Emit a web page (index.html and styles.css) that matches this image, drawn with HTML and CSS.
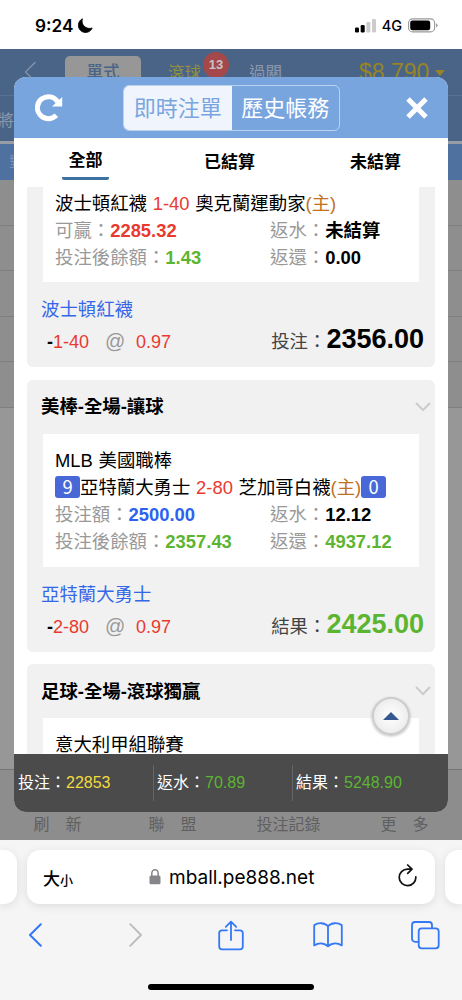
FILE: index.html
```html
<!DOCTYPE html>
<html lang="zh-Hant">
<head>
  <meta charset="UTF-8" />
  <meta name="viewport" content="width=device-width, initial-scale=1.0" />
  <title>即時注單</title>
  <link rel="stylesheet" href="styles.css">
</head>
<body>
  <div class="status">
    <span class="time">9:24</span>
    <svg class="moon" width="15" height="15" viewBox="0 0 15 15"><path d="M4.400.8A7.200 7.200 0 1 0 14.200 10 C8.500 12 2.500 7 4.400.8Z" fill="#000" stroke="#000" stroke-width=".8" stroke-linejoin="round"/></svg>
    <svg class="signal" width="22" height="14" viewBox="0 0 22 14">
      <rect x="0" y="8.5" width="4" height="5" rx="1.2"/>
      <rect x="5.7" y="6" width="4" height="7.5" rx="1.2"/>
      <rect x="11.4" y="3" width="4" height="10.5" rx="1.2" fill="#ccc"/>
      <rect x="17" y="0" width="4" height="13.5" rx="1.2" fill="#ccc"/>
    </svg>
    <span class="net">4G</span>
    <svg class="battery" width="30" height="15" viewBox="0 0 30 15">
      <rect x=".6" y=".9" width="26" height="13" rx="4" fill="none" stroke="#999" stroke-width="1.1"/>
      <rect x="2.2" y="2.5" width="20" height="9.8" rx="2.2"/>
      <path d="M28 5.3q1.5.6 1.5 2t-1.5 2z" fill="#999"/>
    </svg>
  </div>

  <div class="page">
    <div class="topbar">
      <svg class="prev" width="13" height="22" viewBox="0 0 13 22"><path d="M11.5 1 1.5 11l10 10" fill="none" stroke="#8494aa" stroke-width="1.3"/></svg>
      <span class="mode active">單式</span>
      <span class="mode live">滾球<b class="num">13</b></span>
      <span class="mode">過關</span>
      <span class="money">$8,790</span>
      <i class="caret"></i>
    </div>
    <div class="subbar">將開賽</div>
    <div class="sortbar">對</div>
    <div class="rows">
      <div></div><div></div><div></div><div></div><div></div>
    </div>
    <div class="bottomnav">
      <span class="wide">刷新</span>
      <span class="wide">聯盟</span>
      <span>投注記錄</span>
      <span class="wide">更多</span>
    </div>

    <div class="modal">
      <div class="modal-head">
        <svg class="reload" width="28" height="28" viewBox="0 0 28 28">
          <path d="M21.300 21.300A11 11 0 1 1 22.800 8" fill="none" stroke="#fff" stroke-width="5"/>
          <path d="M27.200 3v9.600H17z" fill="#fff"/>
        </svg>
        <div class="switch"><span class="on">即時注單</span><span>歷史帳務</span></div>
        <svg class="close" width="22" height="22" viewBox="0 0 22 22"><path d="m2 2 18 18M20 2 2 20" stroke="#fff" stroke-width="5"/></svg>
      </div>
      <div class="tabs">
        <span class="current">全部</span>
        <span>已結算</span>
        <span>未結算</span>
      </div>

      <div class="list">
        <div class="card first">
          <div class="box">
            <div>波士頓紅襪 <span class="red">1-40</span> 奧克蘭運動家<span class="host">(主)</span></div>
            <div class="pair"><span>可贏：<b class="red">2285.32</b></span><span>返水：<b>未結算</b></span></div>
            <div class="pair"><span>投注後餘額：<b class="green">1.43</b></span><span>返還：<b>0.00</b></span></div>
          </div>
          <div class="pick">波士頓紅襪</div>
          <div class="result">
            <span class="odds"><b>-</b>1-40</span><span class="at">@</span><span class="red">0.97</span>
            <span class="sum">投注：<b>2356.00</b></span>
          </div>
        </div>

        <div class="card">
          <div class="title">美棒-全場-讓球
            <svg width="16" height="10" viewBox="0 0 16 10"><path d="m1 1 7 7 7-7" fill="none" stroke="#ccc" stroke-width="2"/></svg>
          </div>
          <div class="box">
            <div>MLB 美國職棒</div>
            <div class="match"><span class="score">9</span>亞特蘭大勇士 <span class="red">2-80</span> 芝加哥白襪<span class="host">(主)</span><span class="score">0</span></div>
            <div class="pair"><span>投注額：<b class="blue">2500.00</b></span><span>返水：<b>12.12</b></span></div>
            <div class="pair"><span>投注後餘額：<b class="green">2357.43</b></span><span>返還：<b class="green">4937.12</b></span></div>
          </div>
          <div class="pick">亞特蘭大勇士</div>
          <div class="result">
            <span class="odds"><b>-</b>2-80</span><span class="at">@</span><span class="red">0.97</span>
            <span class="sum">結果：<b class="green">2425.00</b></span>
          </div>
        </div>

        <div class="card">
          <div class="title">足球-全場-滾球獨贏
            <svg width="16" height="10" viewBox="0 0 16 10"><path d="m1 1 7 7 7-7" fill="none" stroke="#ccc" stroke-width="2"/></svg>
          </div>
          <div class="box">
            <div>意大利甲組聯賽</div>
          </div>
        </div>
      </div>

      <div class="totals">
        <span>投注：<em class="yellow">22853</em></span>
        <span>返水：<em>70.89</em></span>
        <span>結果：<em>5248.90</em></span>
      </div>
      <div class="gotop"><i></i></div>
    </div>
  </div>

  <div class="browser">
    <div class="address">
      <div class="side left"></div>
      <div class="url">
        <span class="size">大<small>小</small></span>
        <svg class="lock" width="12" height="16" viewBox="0 0 12 16"><path d="M2.8 7V4.4a3.2 3.6 0 0 1 6.4 0V7" fill="none" stroke="#85858a" stroke-width="1.5"/><rect x=".5" y="6.6" width="11" height="8.6" rx="1.5" fill="#85858a"/></svg>
        <span class="host-name">mball.pe888.net</span>
        <svg class="again" width="20" height="23" viewBox="0 0 20 23"><path d="M17.8 12.8A8.3 8.3 0 1 1 9.5 5.1h4M9.7 1l4.3 4.2-4.3 4.2" fill="none" stroke="#111" stroke-width="1.7" stroke-linecap="round" stroke-linejoin="round"/></svg>
      </div>
      <div class="side right"></div>
    </div>
    <div class="tools">
      <svg width="14" height="24" viewBox="0 0 14 24"><path d="M12.8 1.2 2 12l10.8 10.8" stroke-width="2"/></svg>
      <svg class="off" width="14" height="24" viewBox="0 0 14 24"><path d="M1.2 1.2 12 12 1.2 22.8"/></svg>
      <svg width="26" height="31" viewBox="0 0 26 31"><path d="M9 10.3H4A2.8 2.8 0 0 0 1.2 13v13.5A2.8 2.8 0 0 0 4 29.3h18a2.8 2.8 0 0 0 2.8-2.8V13a2.8 2.8 0 0 0-2.8-2.7h-5M13 20V1.7M7.8 6.8 13 1.6l5.2 5.2"/></svg>
      <svg width="30" height="26" viewBox="0 0 30 26"><path d="M15 24.2V4.2C11.5.4 4.8.4 1.2 3.3V23.4C5.5 20.6 11 20.8 15 24.2 19 20.8 24.5 20.6 28.8 23.4V3.3C25.2.4 18.500.4 15 4.2Z"/></svg>
      <svg width="29" height="29" viewBox="0 0 29 29"><rect x="7.7" y="7.3" width="20" height="20" rx="3"/><path d="M7.5 20.8H4a3 3 0 0 1-3-3V4a3 3 0 0 1 3-3h14a3 3 0 0 1 3 3v3"/></svg>
    </div>
    <div class="home"></div>
  </div>
</body>
</html>
```
FILE: styles.css
```css
* {
  box-sizing: border-box;
}
body {
  margin: 0;
  width: 462px;
  height: 1000px;
  overflow: hidden;
  background: #fff;
  color: #000;
  font-family: "Liberation Sans", "Noto Sans CJK TC", sans-serif;
  font-size: 18.4px;
}
svg {
  display: block;
  flex: none;
}

/* status bar */
.status {
  height: 49px;
  display: flex;
  align-items: center;
  padding: 2px 24px 0 35px;
  font-family: Inter, sans-serif;
}
.time {
  width: 43px;
  font-size: 17.2px;
  font-weight: 600;
}
.signal {
  margin-left: auto;
}
.net {
  margin: 0 6px 0 5px;
  font-size: 14.5px;
  font-weight: 500;
}

/* dimmed page */
.page {
  position: relative;
  height: 791px;
  display: flex;
  flex-direction: column;
  background: #979797;
}
.topbar {
  height: 47px;
  display: flex;
  align-items: center;
  padding-left: 24px;
  background: #4a6488;
  border-bottom: 1px solid #597193;
  font-size: 16.5px;
  color: #8c98aa;
}
.mode {
  margin-right: 48px;
}
.mode.active {
  width: 76px;
  height: 32px;
  line-height: 32px;
  margin: 0 27px 0 28px;
  border-radius: 5px;
  background: #979797;
  color: #4a6488;
  text-align: center;
  font-weight: 500;
}
.live {
  position: relative;
  color: #91903a;
}
.num {
  position: absolute;
  left: 35px;
  top: -8px;
  width: 26px;
  height: 26px;
  line-height: 26px;
  border-radius: 50%;
  background: #a4484b;
  color: #c8c3c5;
  font-size: 13px;
  text-align: center;
}
.money {
  margin-left: 29px;
  font-size: 23px;
  color: #988425;
}
.caret {
  margin: 2px 0 0 6px;
  border: 5px solid transparent;
  border-top: 6px solid #988425;
  border-bottom: 0;
}
.subbar {
  height: 48px;
  line-height: 49px;
  background: #4a6488;
  border-bottom: 3px solid #979ca5;
  color: #8c98aa;
  font-size: 16px;
  text-indent: -2px;
}
.sortbar {
  height: 36px;
  line-height: 35px;
  padding-left: 9px;
  background: #4e719f;
  color: #7c91b0;
  font-size: 15px;
}
.rows {
  flex: 1;
}
.rows div {
  height: 45.6px;
  background: #8e8e8e;
  border-bottom: 1px solid #7e7e7e;
}
.bottomnav {
  height: 71px;
  display: grid;
  grid-template-columns: 115px 115px 117px 115px;
  align-items: end;
  padding-bottom: 3px;
  background: #8d8d8d;
  border-top: 1px solid #747474;
  color: #606060;
  font-size: 16px;
  line-height: 24px;
  text-align: center;
}
.wide {
  letter-spacing: 16px;
  text-indent: 16px;
}

/* bet record dialog */
.modal {
  position: absolute;
  left: 14px;
  top: 28px;
  width: 434px;
  height: 735px;
  display: flex;
  flex-direction: column;
  overflow: hidden;
  border-radius: 12px;
  background: #fff;
}
.modal-head {
  height: 61px;
  display: flex;
  align-items: center;
  padding: 0 20px 0 21px;
  background: #79a5df;
}
.switch {
  display: flex;
  width: 217px;
  height: 46px;
  margin: 0 auto 0 60px;
  border: 1px solid #bbd1f0;
  border-radius: 6px;
  overflow: hidden;
  color: #fff;
  font-size: 22px;
  line-height: 46px;
  text-align: center;
}
.switch span {
  flex: 1;
}
.switch .on {
  background: #f0f4fc;
  color: #79a5df;
}
.tabs {
  height: 49px;
  display: flex;
  justify-content: space-between;
  padding: 0 47px 0 48px;
  font-size: 17px;
  line-height: 50px;
  font-weight: 700;
}
.tabs .current {
  width: 47px;
  height: 42px;
  line-height: 46px;
  border-bottom: 3px solid #3e72a3;
  border-radius: 2px;
  text-align: center;
}
.list {
  height: 567px;
  overflow: hidden;
  padding: 0 13px;
  line-height: 27px;
}
.card {
  height: 272px;
  margin-bottom: 12.5px;
  padding: 0 16px;
  border-radius: 6px;
  background: #f1f1f1;
}
.card.first {
  height: 180px;
  border-radius: 0 0 6px 6px;
}
.title {
  display: flex;
  justify-content: space-between;
  align-items: center;
  height: 54px;
  margin: 0 -12px 0 -2px;
  font-weight: 700;
}
.box {
  height: 133px;
  padding: 13px 12px;
  background: #fff;
  white-space: nowrap;
  word-spacing: .6px;
}
.first .box {
  height: 95px;
  padding-top: 3px;
}
.pair {
  display: grid;
  grid-template-columns: 215px 1fr;
  color: #999;
}
.pair b {
  color: #000;
}
.score {
  display: inline-block;
  width: 25px;
  height: 22px;
  line-height: 21px;
  border-radius: 3px;
  background: #4868d8;
  color: #fff;
  font-family: "Noto Sans CJK TC", sans-serif;
  text-align: center;
}
.match {
  height: 27px;
}
.red,
.pair .red {
  color: #e93a2f;
}
.green,
.pair .green {
  color: #5cb531;
}
.blue,
.pair .blue {
  color: #2c62f0;
}
.host {
  color: #c0701f;
}
.pick {
  margin: 14px 0 0 -2px;
  color: #3468e8;
}
.result {
  display: flex;
  align-items: baseline;
  height: 32px;
  line-height: 32px;
  padding-left: 4px;
  font-size: 18px;
}
.odds {
  width: 58px;
  color: #e93a2f;
}
.odds b {
  color: #000;
}
.at {
  width: 31px;
  font-size: 20px;
  color: #999;
}
.sum {
  margin: 0 -5px 0 auto;
  font-size: 18.4px;
  color: #444;
}
.sum b {
  font-size: 27px;
  color: #000;
}
.sum .green {
  color: #5cb531;
}
.totals {
  height: 58px;
  display: grid;
  grid-template-columns: 139px 139px 1fr;
  align-items: center;
  background: #4b4b4b;
  color: #fff;
  font-size: 16px;
}
.totals span {
  height: 36px;
  line-height: 36px;
  padding-left: 4px;
}
.totals span + span {
  padding-left: 3px;
  border-left: 1px solid #666;
}
.totals em {
  font-style: normal;
  color: #5cb531;
}
.totals .yellow {
  color: #f2db3c;
}
.gotop {
  position: absolute;
  right: 38px;
  top: 620px;
  width: 38px;
  height: 38px;
  display: flex;
  align-items: center;
  justify-content: center;
  border: 2px solid #ccc;
  border-radius: 50%;
  background: radial-gradient(#fff, #e6e6e6);
  box-shadow: 0 1px 3px rgba(0, 0, 0, .3);
}
.gotop i {
  border: 8px solid transparent;
  border-bottom: 8px solid #34588f;
  border-top: 0;
}

/* safari bars */
.browser {
  height: 160px;
  padding-top: 10px;
  background: #f5f5f5;
}
.address {
  display: flex;
  gap: 10px;
}
.url,
.side {
  flex: none;
  height: 54px;
  border-radius: 13px;
  background: #fff;
  box-shadow: 0 2px 10px rgba(0, 0, 0, .1);
}
.left {
  width: 17px;
  border-radius: 0 13px 13px 0;
}
.right {
  width: 17px;
  border-radius: 13px 0 0 13px;
}
.url {
  width: 408px;
  display: flex;
  align-items: center;
  padding: 0 17px 0 16px;
}
.size {
  width: 106px;
  font-size: 17px;
  font-weight: 500;
}
.size small {
  font-size: 13px;
}
.host-name {
  margin-left: 8px;
  font-family: Inter, sans-serif;
  font-size: 19px;
}
.again {
  margin: -3px 0 0 auto;
}
.tools {
  height: 62px;
  display: grid;
  grid-template-columns: 101px 89px 95px 98px 29px;
  align-items: center;
  padding-left: 28px;
}
.tools svg {
  fill: none;
  stroke: #3478f6;
  stroke-width: 1.8;
  stroke-linecap: round;
  stroke-linejoin: round;
}
.tools .off {
  stroke: #bbb;
}
.home {
  width: 166px;
  height: 6px;
  margin: 18px auto 0;
  border-radius: 3px;
  background: #000;
}
```
